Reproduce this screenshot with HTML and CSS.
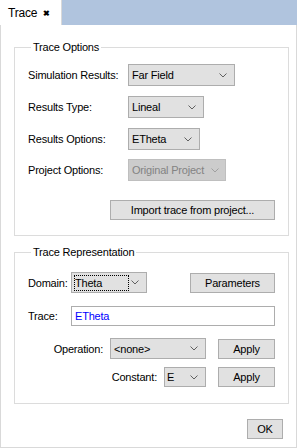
FILE: index.html
```html
<!DOCTYPE html>
<html lang="en">
<head>
    <meta charset="UTF-8">
    <title>Trace</title>
    <link rel="stylesheet" href="styles.css">
</head>
<body>
    <!-- tab strip -->
    <div class="tabbar">
        <div class="tab">Trace <span class="close">&#x2716;</span></div>
    </div>

    <div class="page">
        <!-- trace options -->
        <fieldset class="group opts">
            <legend>Trace Options</legend>
            <div class="form">
                <label>Simulation Results:</label>
                <div class="combo w-far">Far Field<svg class="chev" width="8" height="5" viewBox="0 0 8 5"><path d="M0.5 0.5 L4 4 L7.5 0.5" /></svg></div>

                <label>Results Type:</label>
                <div class="combo w-type">Lineal<svg class="chev" width="8" height="5" viewBox="0 0 8 5"><path d="M0.5 0.5 L4 4 L7.5 0.5" /></svg></div>

                <label>Results Options:</label>
                <div class="combo w-res">ETheta<svg class="chev" width="8" height="5" viewBox="0 0 8 5"><path d="M0.5 0.5 L4 4 L7.5 0.5" /></svg></div>

                <label class="last">Project Options:</label>
                <div class="combo w-proj disabled last">Original Project<svg class="chev" width="8" height="5" viewBox="0 0 8 5"><path d="M0.5 0.5 L4 4 L7.5 0.5" /></svg></div>
            </div>
            <div class="import-row">
                <button class="btn import">Import trace from project...</button>
            </div>
        </fieldset>

        <!-- trace representation -->
        <fieldset class="group repr">
            <legend>Trace Representation</legend>
            <div class="row domain-row">
                <label class="short">Domain:</label>
                <div class="combo w-dom"><span class="focus">Theta</span><svg class="chev" width="8" height="5" viewBox="0 0 8 5"><path d="M0.5 0.5 L4 4 L7.5 0.5" /></svg></div>
                <button class="btn params">Parameters</button>
            </div>
            <div class="row trace-row">
                <label class="short">Trace:</label>
                <div class="textbox">ETheta</div>
            </div>
            <div class="row op-row">
                <label>Operation:</label>
                <div class="combo w-op">&lt;none&gt;<svg class="chev" width="8" height="5" viewBox="0 0 8 5"><path d="M0.5 0.5 L4 4 L7.5 0.5" /></svg></div>
                <button class="btn apply">Apply</button>
            </div>
            <div class="row const-row">
                <label>Constant:</label>
                <div class="combo w-const">E<svg class="chev" width="8" height="5" viewBox="0 0 8 5"><path d="M0.5 0.5 L4 4 L7.5 0.5" /></svg></div>
                <button class="btn apply">Apply</button>
            </div>
        </fieldset>

        <div class="footer">
            <button class="btn ok">OK</button>
        </div>
    </div>
</body>
</html>
```

FILE: styles.css
```css
body {
    margin: 0;
    font-family: "Liberation Sans", Arial, sans-serif;
    font-size: 11px;
    letter-spacing: -0.2px;
    color: #000;
    background-color: #fff;
}
.tabbar {
    height: 25px;
    background-color: #b0c4de;
    display: flex;
}
.tab {
    width: 62px;
    box-sizing: border-box;
    background-color: #fff;
    border-right: 1px solid #d9d9d9;
    padding: 6px 0 0 8px;
    font-size: 12px;
}
.close {
    font-size: 8px;
    margin-left: 3px;
    font-weight: bold;
    vertical-align: 1px;
}
.page {
    height: 423px;
    box-sizing: border-box;
    border: 1px solid #d9d9d9;
    border-top: none;
    padding: 15px 7px 0 13px;
}
.group {
    margin: 0;
    padding: 0 13px;
    border: 1px solid #dcdcdc;
    min-width: 0;
}
.group legend {
    margin-left: 3px;
    padding: 0 2px;
    line-height: 14px;
    font-size: 11px;
}
.opts {
    padding-top: 10px;
    padding-bottom: 15px;
}
.form {
    display: grid;
    grid-template-columns: 100px auto;
    grid-auto-rows: 22px;
    row-gap: 10px;
    align-items: center;
    justify-items: start;
}
.form .last {
    margin-top: -2px;
}
.combo {
    height: 22px;
    box-sizing: border-box;
    border: 1px solid #adadad;
    background-color: #e1e1e1;
    display: flex;
    align-items: center;
    justify-content: space-between;
    padding: 0 7px 0 3px;
    white-space: nowrap;
}
.chev {
    fill: none;
    stroke: #606060;
    stroke-width: 1;
    flex: none;
}
.combo.disabled {
    background-color: #cccccc;
    border-color: #bfbfbf;
    color: #838383;
    padding-right: 6px;
}
.combo.disabled .chev {
    stroke: #a0a0a0;
}
.w-far { width: 107px; }
.w-type { width: 76px; }
.w-res { width: 72px; }
.w-proj { width: 98px; }
.w-dom { width: 76px; height: 21px; }
.w-op { width: 96px; height: 21px; }
.w-const { width: 42px; height: 20px; padding-left: 2px; }
.btn {
    font-family: inherit;
    font-size: 11px;
    letter-spacing: -0.2px;
    color: #000;
    background-color: #e1e1e1;
    border: 1px solid #adadad;
    border-radius: 0;
    height: 20px;
    padding: 0;
    margin: 0;
}
.import-row {
    display: flex;
    justify-content: flex-end;
    margin-top: 18px;
}
.import {
    width: 165px;
}
.repr {
    margin-top: 9px;
    padding-top: 13px;
    padding-bottom: 16px;
}
.row {
    display: flex;
    align-items: center;
}
.short {
    width: 43px;
}
.domain-row {
    justify-content: space-between;
}
.domain-row .short + .combo {
    margin-right: auto;
}
.focus {
    outline: 1px dotted #000;
    padding: 1px 0;
    width: 53px;
}
.params {
    width: 85px;
}
.trace-row {
    margin-top: 13px;
}
.textbox {
    flex: 1;
    height: 20px;
    box-sizing: border-box;
    border: 1px solid #adadad;
    background: #fff;
    color: #0000ff;
    padding: 3px 0 0 3px;
}
.op-row, .const-row {
    justify-content: flex-end;
}
.op-row {
    margin-top: 12px;
}
.const-row {
    margin-top: 8px;
}
.op-row label, .const-row label {
    margin-right: 7px;
}
.apply {
    width: 57px;
    margin-left: 12px;
}
.footer {
    display: flex;
    justify-content: flex-end;
    padding: 15px 6px 0 0;
}
.ok {
    width: 36px;
}
```
